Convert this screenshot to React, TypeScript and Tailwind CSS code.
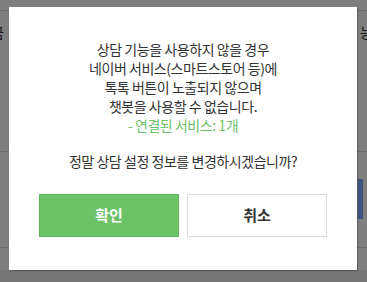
import React from 'react'

const font = { fontFamily: '"Noto Sans CJK KR", "Noto Sans", sans-serif' }

export default function App() {
  return (
    <div className="relative h-[282px] w-full overflow-hidden bg-white" style={font}>
      {/* page behind the dialog */}
      <div className="flex h-full flex-col">
        <div className="h-[11px] border-b border-[#dcdcdc]" />
        <div className="flex h-[141px] items-start justify-between border-b border-[#dcdcdc] pt-[11px] text-[14px] text-[#333]">
          <span className="-ml-[9px]">금</span>
          <span className="-mr-[6px]">능</span>
        </div>
        <div className="flex h-[96px] items-start justify-end border-b border-[#dcdcdc] pt-[27px]">
          <div className="mr-[4px] h-[40px] w-[5px] bg-[#7aaaff]" />
        </div>
        <div className="h-[22px]" />
        <div className="flex-1 bg-[#ececec]" />
      </div>

      <div className="absolute inset-0 bg-black/50" />

      <div className="absolute left-[9px] top-[7px] flex h-[263px] w-[348px] flex-col items-center bg-white pt-[33px] shadow-[1px_1px_1px_rgba(0,0,0,0.25)]">
        <div className="text-center text-[14px] leading-[19px] tracking-[-0.45px] text-[#333]">
          <p>상담 기능을 사용하지 않을 경우</p>
          <p>네이버 서비스(스마트스토어 등)에</p>
          <p>톡톡 버튼이 노출되지 않으며</p>
          <p>챗봇을 사용할 수 없습니다.</p>
          <p className="text-[#6cc26a]">- 연결된 서비스: 1개</p>
        </div>
        <p className="mt-[17px] text-center text-[14px] leading-[19px] tracking-[-0.45px] text-[#333]">
          정말 상담 설정 정보를 변경하시겠습니까?
        </p>
        <div className="mt-[23px] flex gap-[8px]">
          <button className="h-[43px] w-[140px] border border-[#5fb65c] bg-[#6ac367] text-[15px] font-bold text-white">
            확인
          </button>
          <button className="h-[43px] w-[140px] border border-[#dcdcdc] bg-white text-[15px] font-bold text-[#333]">
            취소
          </button>
        </div>
      </div>
    </div>
  )
}
